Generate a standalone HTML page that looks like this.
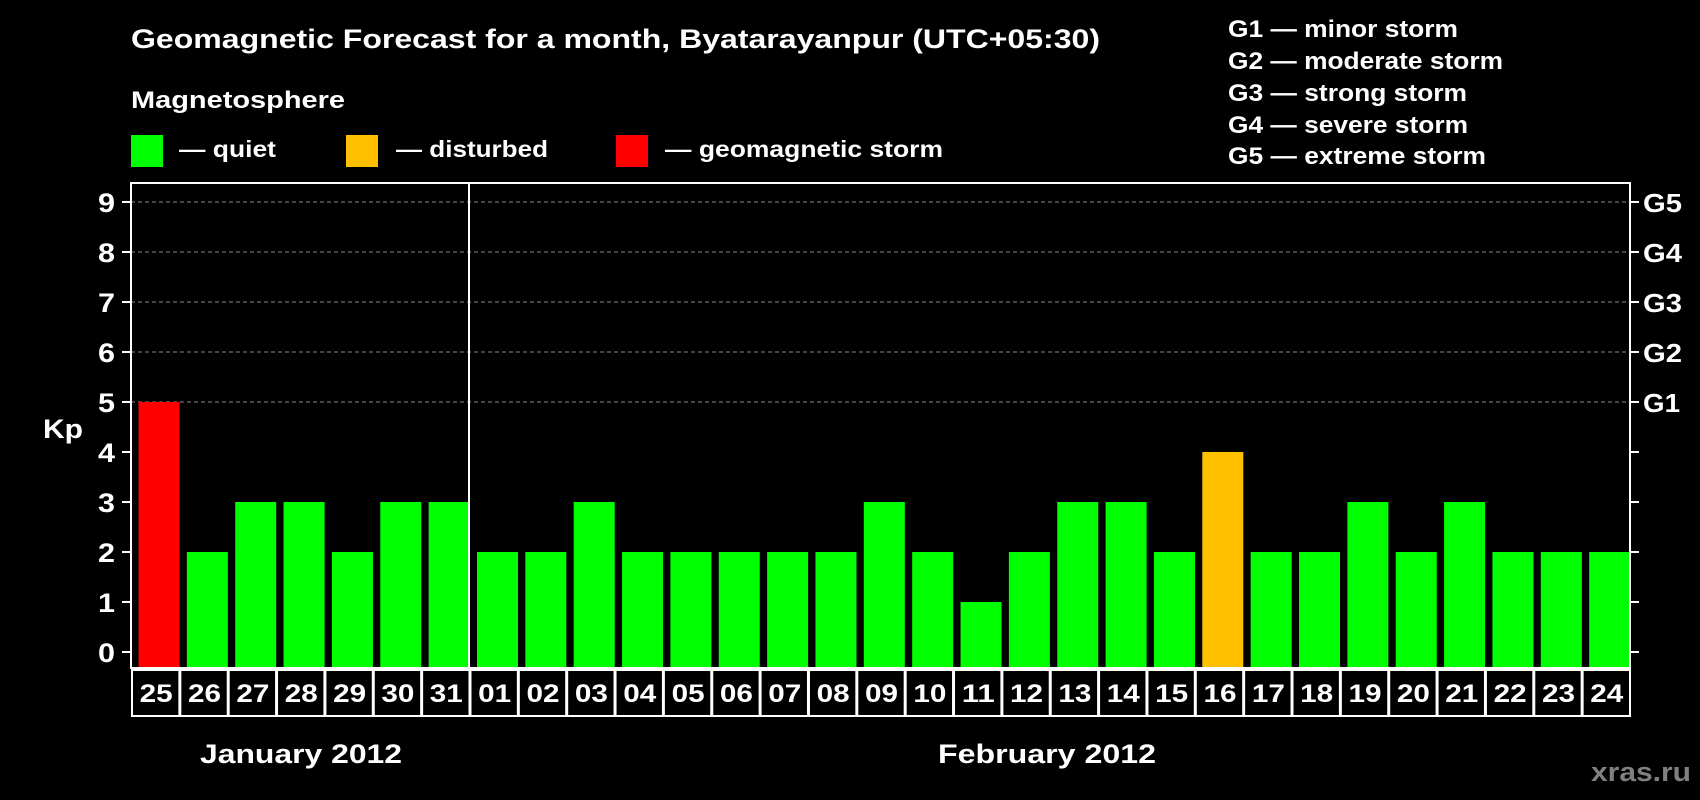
<!DOCTYPE html>
<html><head><meta charset="utf-8"><style>
html,body{margin:0;padding:0;background:#000;}
svg{display:block}
text{font-family:"Liberation Sans",Arial,sans-serif;font-weight:bold;fill:#fff}
</style></head><body>
<svg width="1700" height="800" viewBox="0 0 1700 800" xmlns="http://www.w3.org/2000/svg">
<rect width="1700" height="800" fill="#000"/>
<text x="131" y="48" font-size="27" textLength="969" lengthAdjust="spacingAndGlyphs">Geomagnetic Forecast for a month, Byatarayanpur (UTC+05:30)</text>
<text x="131" y="108" font-size="24" textLength="214" lengthAdjust="spacingAndGlyphs">Magnetosphere</text>
<rect x="131" y="135" width="32" height="32" fill="#00ff00"/>
<text x="179" y="157" font-size="23" textLength="97" lengthAdjust="spacingAndGlyphs">— quiet</text>
<rect x="346" y="135" width="32" height="32" fill="#ffc000"/>
<text x="396" y="157" font-size="23" textLength="152" lengthAdjust="spacingAndGlyphs">— disturbed</text>
<rect x="616" y="135" width="32" height="32" fill="#ff0000"/>
<text x="665" y="157" font-size="23" textLength="278" lengthAdjust="spacingAndGlyphs">— geomagnetic storm</text>
<g font-size="24">
<text x="1228" y="37" textLength="230" lengthAdjust="spacingAndGlyphs">G1 — minor storm</text>
<text x="1228" y="69" textLength="275" lengthAdjust="spacingAndGlyphs">G2 — moderate storm</text>
<text x="1228" y="101" textLength="239" lengthAdjust="spacingAndGlyphs">G3 — strong storm</text>
<text x="1228" y="133" textLength="240" lengthAdjust="spacingAndGlyphs">G4 — severe storm</text>
<text x="1228" y="164" textLength="258" lengthAdjust="spacingAndGlyphs">G5 — extreme storm</text>
</g>
<g id="plot">
<g stroke="#888" stroke-dasharray="4,3" stroke-width="1">
<line x1="131" x2="1630" y1="202" y2="202"/>
<line x1="131" x2="1630" y1="252" y2="252"/>
<line x1="131" x2="1630" y1="302" y2="302"/>
<line x1="131" x2="1630" y1="352" y2="352"/>
<line x1="131" x2="1630" y1="402" y2="402"/>
</g>
<g id="bars"></g>
<rect x="131" y="183" width="1499" height="485" fill="none" stroke="#fff" stroke-width="2"/>
<line x1="469" x2="469" y1="183" y2="668" stroke="#fff" stroke-width="2"/>
<g id="ticks" stroke="#fff" stroke-width="2"></g>
<g id="ylab" font-size="27"></g>
<text x="43" y="438" font-size="27" textLength="40" lengthAdjust="spacingAndGlyphs">Kp</text>
<g font-size="26">
<text x="1643" y="212" textLength="39" lengthAdjust="spacingAndGlyphs">G5</text>
<text x="1643" y="262" textLength="39" lengthAdjust="spacingAndGlyphs">G4</text>
<text x="1643" y="312" textLength="39" lengthAdjust="spacingAndGlyphs">G3</text>
<text x="1643" y="362" textLength="39" lengthAdjust="spacingAndGlyphs">G2</text>
<text x="1643" y="412" textLength="37" lengthAdjust="spacingAndGlyphs">G1</text>
</g>
<g id="dates" font-size="25"></g>
</g>
<text x="200" y="763" font-size="27" textLength="202" lengthAdjust="spacingAndGlyphs">January 2012</text>
<text x="938" y="763" font-size="27" textLength="218" lengthAdjust="spacingAndGlyphs">February 2012</text>
<text x="1591" y="781" font-size="27" textLength="100" lengthAdjust="spacingAndGlyphs" style="fill:#808080">xras.ru</text>
<script>
var v=[5,2,3,3,2,3,3,2,2,3,2,2,2,2,2,3,2,1,2,3,3,2,4,2,2,3,2,3,2,2,2];
var d=["25","26","27","28","29","30","31"];for(var i=1;i<=24;i++)d.push((i<10?"0":"")+i);
var ns="http://www.w3.org/2000/svg",sw=1499/31;
var b=document.getElementById("bars"),dt=document.getElementById("dates"),tk=document.getElementById("ticks"),yl=document.getElementById("ylab");
function el(t,a,p){var e=document.createElementNS(ns,t);for(var k in a)e.setAttribute(k,a[k]);p.appendChild(e);return e;}
for(var i=0;i<31;i++){var x=131+i*sw;
var c=v[i]>=5?"#ff0000":(v[i]==4?"#ffc000":"#00ff00");
el("rect",{x:x+7.5,y:652-v[i]*50,width:41,height:v[i]*50+16,fill:c},b);
el("rect",{x:x+1,y:670,width:sw-1,height:46,fill:"none",stroke:"#fff","stroke-width":2},dt);
var t=el("text",{x:x+sw/2+1-16.5,y:702,textLength:33,lengthAdjust:"spacingAndGlyphs"},dt);t.textContent=d[i];}
for(var k=0;k<=9;k++){var y=652-k*50;
el("line",{x1:122,x2:131,y1:y,y2:y},tk);el("line",{x1:1630,x2:1639,y1:y,y2:y},tk);
var t=el("text",{x:98,y:y+10,textLength:17,lengthAdjust:"spacingAndGlyphs"},yl);t.textContent=k;}
</script>
</svg>
</body></html>
